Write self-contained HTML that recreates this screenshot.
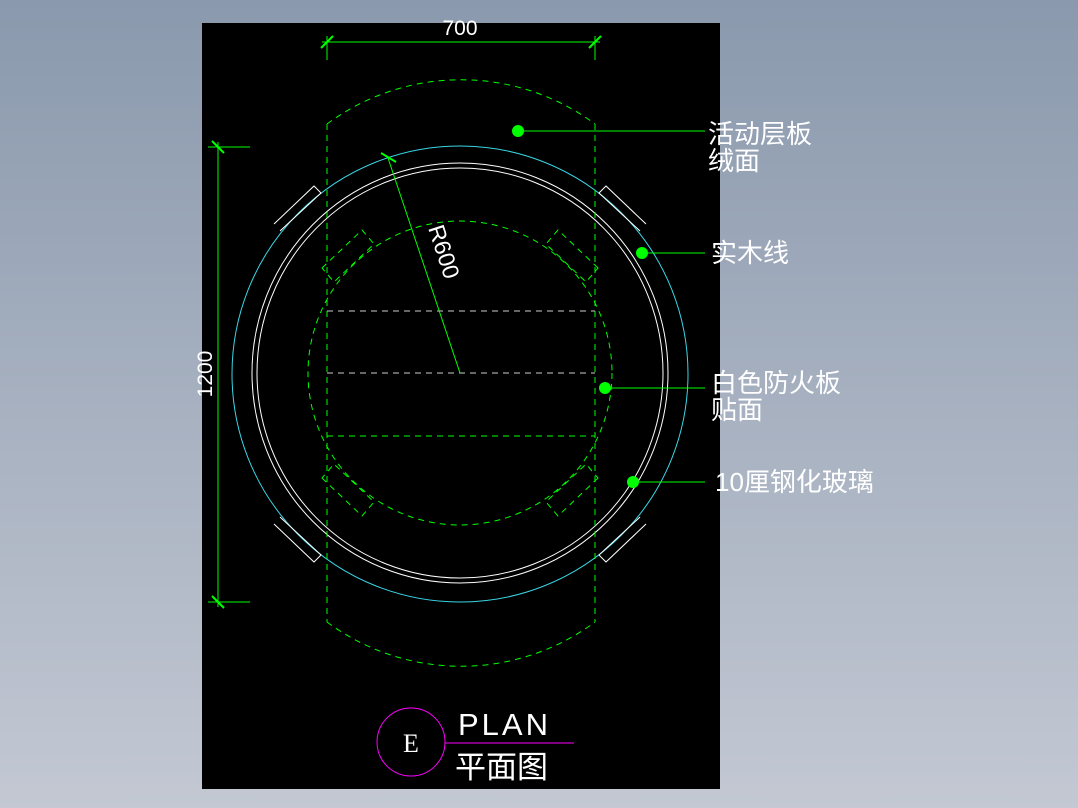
<!DOCTYPE html>
<html><head><meta charset="utf-8"><style>
html,body{margin:0;padding:0}
body{width:1078px;height:808px;overflow:hidden;background:linear-gradient(#8a99ad,#c3c8d3);position:relative;font-family:"Liberation Sans","Noto Sans CJK SC",sans-serif}
svg{position:absolute;left:0;top:0}
</style></head><body>
<svg width="1078" height="808" viewBox="0 0 1078 808">
<rect x="202" y="23" width="518" height="766" fill="#000"/>
<g fill="none" stroke-width="1">
<circle cx="460" cy="374" r="228" stroke="#3ad6e6"/>
<ellipse cx="460" cy="373" rx="208" ry="210" stroke="#fff"/>
<ellipse cx="460" cy="373" rx="203" ry="205" stroke="#fff"/>
<g stroke="#fff">
<path d="M274 224 L314 186 L321 193 L280 231"/>
<path d="M646 224 L606 186 L599 193 L640 231"/>
<path d="M274 524 L314 562 L321 555 L280 517"/>
<path d="M646 524 L606 562 L599 555 L640 517"/>
</g>
<g stroke="#0f0" stroke-dasharray="6 5">
<circle cx="460" cy="373" r="152"/>
<line x1="327" y1="124" x2="327" y2="622"/>
<line x1="595" y1="124" x2="595" y2="622"/>
<path d="M327 124 A225 225 0 0 1 595 124"/>
<path d="M327 622 A225 225 0 0 0 595 622"/>
<line x1="327" y1="436" x2="595" y2="436"/>
<path d="M322 268 L362 230 L374 244 L334 282 Z"/>
<path d="M598 268 L558 230 L546 244 L586 282 Z"/>
<path d="M322 478 L362 516 L374 502 L334 464 Z"/>
<path d="M598 478 L558 516 L546 502 L586 464 Z"/>
</g>
<g stroke="#ccc" stroke-dasharray="6 5">
<line x1="327" y1="311" x2="595" y2="311"/>
<line x1="327" y1="373" x2="595" y2="373"/>
</g>
<g stroke="#0f0">
<line x1="388" y1="158" x2="460" y2="373"/>
<line x1="381" y1="153" x2="396" y2="162" stroke-width="2"/>
<line x1="322" y1="42" x2="600" y2="42"/>
<line x1="327" y1="36" x2="327" y2="60"/>
<line x1="595" y1="36" x2="595" y2="60"/>
<line x1="321" y1="48" x2="333" y2="36" stroke-width="2"/>
<line x1="589" y1="48" x2="601" y2="36" stroke-width="2"/>
<line x1="218" y1="142" x2="218" y2="607"/>
<line x1="208" y1="147" x2="250" y2="147"/>
<line x1="208" y1="602" x2="250" y2="602"/>
<line x1="212" y1="141" x2="224" y2="153" stroke-width="2"/>
<line x1="212" y1="596" x2="224" y2="608" stroke-width="2"/>
<line x1="518" y1="131" x2="705" y2="131"/>
<line x1="642" y1="253" x2="705" y2="253"/>
<line x1="605" y1="388" x2="705" y2="388"/>
<line x1="633" y1="482" x2="705" y2="482"/>
</g>
<g fill="#0f0">
<circle cx="518" cy="131" r="6"/><circle cx="642" cy="253" r="6"/>
<circle cx="605" cy="388" r="6"/><circle cx="633" cy="482" r="6"/>
</g>
<circle cx="411" cy="742" r="34" stroke="#f0f"/>
<line x1="445" y1="743" x2="574" y2="743" stroke="#f0f"/>
</g>
<g fill="#fff" font-family="Liberation Sans,Noto Sans CJK SC,sans-serif">
<text x="460" y="35" font-size="21" text-anchor="middle">700</text>
<text transform="translate(212 374) rotate(-90)" font-size="21" text-anchor="middle">1200</text>
<text transform="translate(428 228) rotate(72)" font-size="23">R600</text>
<text x="708" y="143" font-size="26">活动层板</text>
<text x="708" y="170" font-size="26">绒面</text>
<text x="711" y="262" font-size="26">实木线</text>
<text x="711" y="392" font-size="26">白色防火板</text>
<text x="711" y="419" font-size="26">贴面</text>
<text x="715" y="491" font-size="26">10厘钢化玻璃</text>
<text x="411" y="752" font-size="26" font-family="Liberation Serif,serif" text-anchor="middle">E</text>
<text x="458" y="735" font-size="31" letter-spacing="3">PLAN</text>
<text x="455" y="778" font-size="31">平面图</text>
</g>
</svg>
</body></html>
